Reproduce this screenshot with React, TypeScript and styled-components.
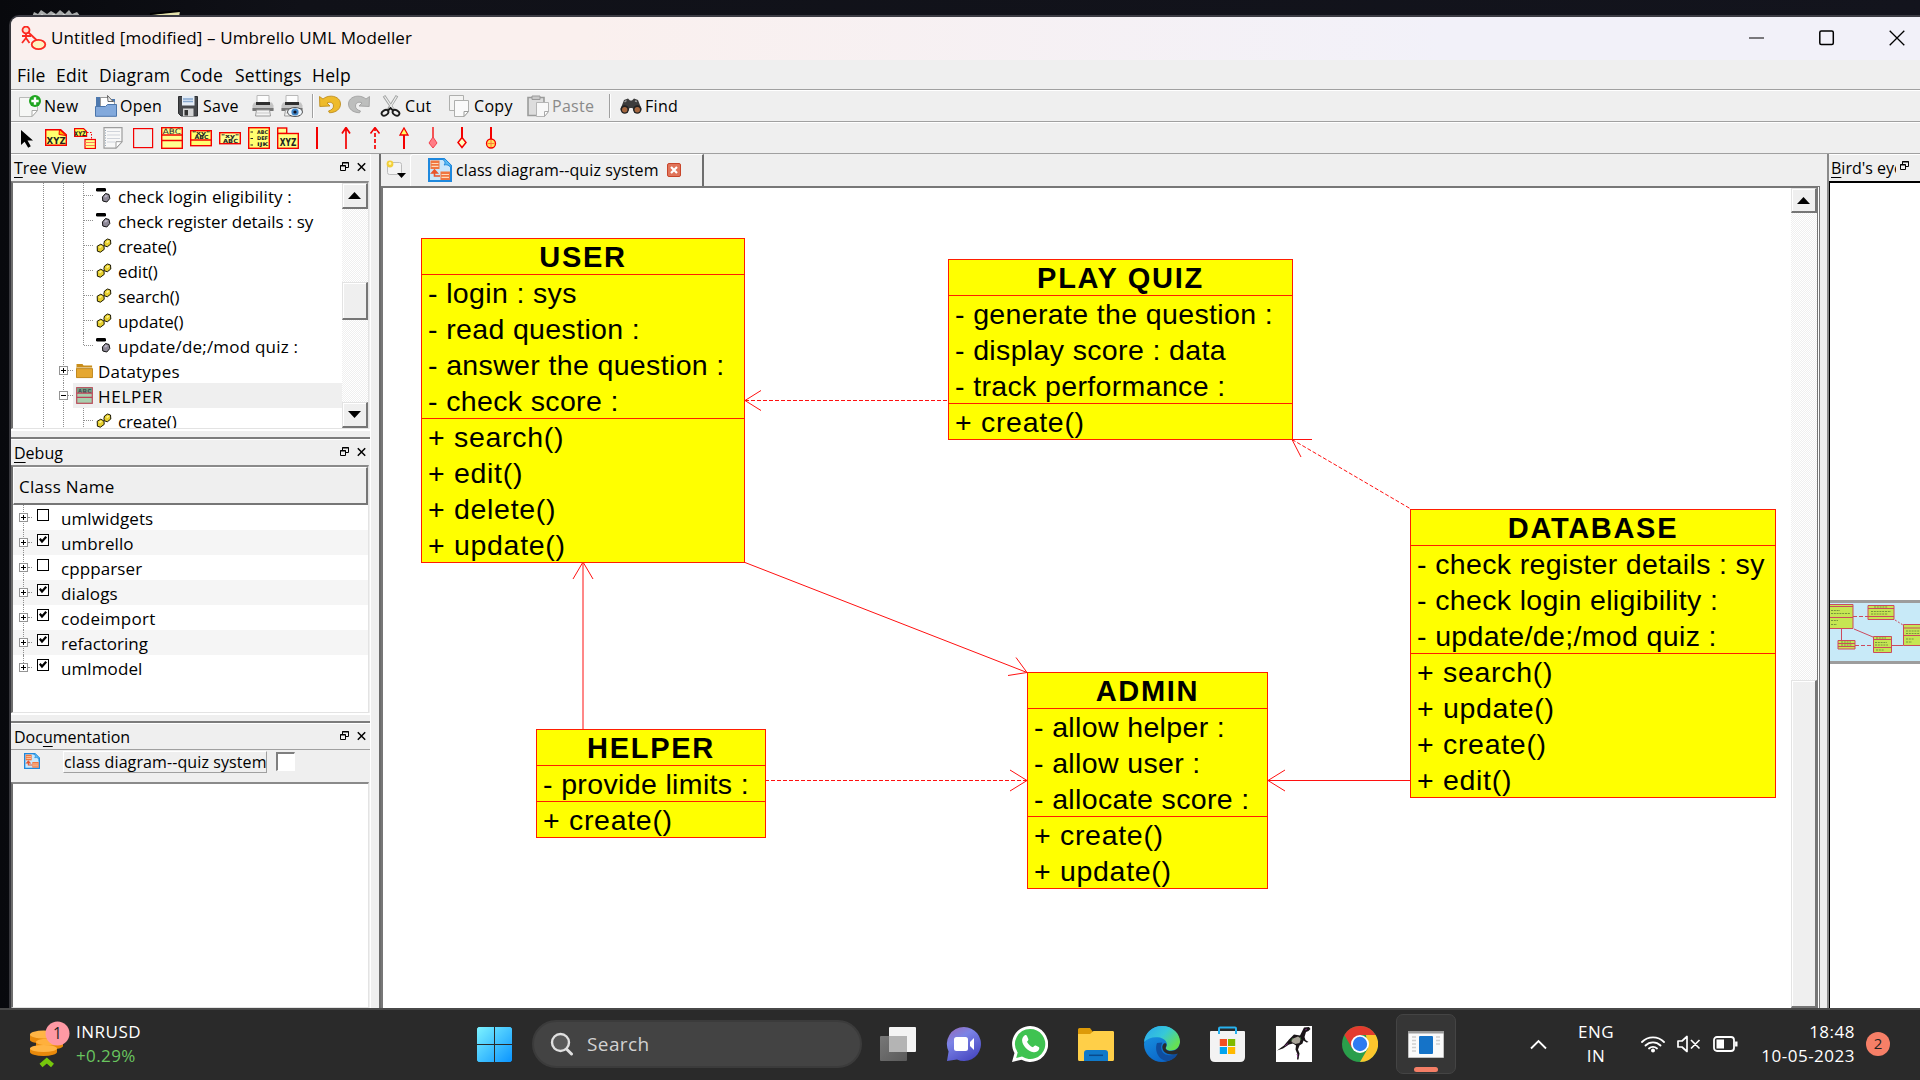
import React from "react";
import styled, { createGlobalStyle, css } from "styled-components";

const Global = createGlobalStyle`
  * { box-sizing: border-box; }
  body { margin: 0; background: #0c0d14; overflow: hidden; }
`;

const uiFont = `"Open Sans", "Noto Sans", sans-serif`;

/* ---------- shell ---------- */

const Screen = styled.div`
  width: 1920px;
  height: 1080px;
  display: flex;
  flex-direction: column;
  overflow: hidden;
  background: linear-gradient(90deg, #08090d 0, #101118 300px, #13141d 100%);
  font-family: ${uiFont};
  color: #000;
`;

const Wallpaper = styled.div`
  height: 15px;
  flex: none;
`;

const WindowRow = styled.div`
  flex: 1;
  min-height: 0;
  display: flex;
  padding-left: 9px;
`;

const Window = styled.div`
  flex: 1;
  min-width: 0;
  display: flex;
  flex-direction: column;
  background: #efefef;
  border-top: 2px solid #3b3b43;
  border-left: 2px solid #37373c;
  border-top-left-radius: 10px;
  overflow: hidden;
`;

const TitleBar = styled.div`
  height: 43px;
  flex: none;
  display: flex;
  align-items: center;
  padding-left: 10px;
  background: linear-gradient(90deg, #faf0ee 0, #faf0ee 30%, #f2f1f9 75%, #f2f1f9 100%);
`;

const TitleText = styled.div`
  flex: 1;
  margin: -3px 0 0 4px;
  font-size: 17px;
  letter-spacing: 0.1px;
`;

const Caption = styled.div`
  display: flex;
  gap: 54px;
  align-items: center;
  padding-right: 15px;
  margin-top: -2px;
`;

const MenuBar = styled.div`
  height: 29px;
  flex: none;
  display: flex;
  align-items: center;
  padding: 1px 0 0 6px;
`;

const MenuItem = styled.div<{ $w: number }>`
  width: ${(p) => p.$w}px;
  font-size: 17.5px;
  letter-spacing: 0.25px;
`;

const ToolBar = styled.div<{ $pad: number; $gap?: number }>`
  height: 32px;
  flex: none;
  display: flex;
  align-items: center;
  gap: ${(p) => p.$gap ?? 0}px;
  padding-left: ${(p) => p.$pad}px;
  border-top: 1px solid #a0a0a0;
  box-shadow: inset 0 1px 0 #fff;
`;

const Tool = styled.div<{ $w: number; $off?: boolean }>`
  width: ${(p) => p.$w}px;
  display: flex;
  align-items: center;
  gap: 3px;
  font-size: 16px;
  letter-spacing: 0.3px;
  white-space: nowrap;
  color: ${(p) => (p.$off ? "#8a8a8a" : "#000")};
  svg { flex: none; }
`;

const Divider = styled.div<{ $w: number }>`
  width: ${(p) => p.$w}px;
  height: 24px;
  border-left: 1px solid #a0a0a0;
  box-shadow: inset 1px 0 0 #fff;
`;

const Body = styled.div`
  flex: 1;
  min-height: 0;
  display: flex;
  border-top: 1px solid #a0a0a0;
`;

/* ---------- docks ---------- */

const LeftDock = styled.div`
  width: 359px;
  flex: none;
  display: flex;
  flex-direction: column;
`;

const Split = styled.div`
  width: 11px;
  flex: none;
  border-right: 2px solid #6c6c6c;
  border-left: 1px solid #fff;
`;

const DockTitle = styled.div<{ $h: number }>`
  height: ${(p) => p.$h}px;
  flex: none;
  display: flex;
  align-items: center;
  justify-content: space-between;
  padding: 0 4px 0 3px;
  font-size: 16px;
  white-space: nowrap;
  border-top: 1px solid #fff;
  u { text-underline-offset: 3px; text-decoration-thickness: 1px; text-decoration-skip-ink: none; }
`;

const DockButtons = styled.div`
  display: flex;
  gap: 8px;
  margin-top: -2px;
`;

const Gap = styled.div`
  height: 10px;
  flex: none;
  border-top: 2px solid #fff;
  border-bottom: 2px solid #7c7c7c;
`;

const Sunken = styled.div<{ $h?: number }>`
  ${(p) => (p.$h ? css`height: ${p.$h}px; flex: none;` : css`flex: 1;`)}
  margin-right: 1px;
  display: flex;
  overflow: hidden;
  background: #fff;
  border: 1px solid #a0a0a0;
  border-top: 2px solid #8a8a8a;
  border-left: 2px solid #6e6e6e;
  border-right: 1px solid #e3e3e3;
  border-bottom: 1px solid #e3e3e3;
`;

const Rows = styled.div`
  flex: 1;
  min-width: 0;
  display: flex;
  flex-direction: column;
`;

const TreeRow = styled.div<{ $lead: number }>`
  height: 25px;
  flex: none;
  display: flex;
  padding-left: ${(p) => p.$lead}px;
`;

const Guide = styled.div<{ $half?: boolean; $tight?: boolean }>`
  width: ${(p) => (p.$tight ? 1 : 20)}px;
  height: ${(p) => (p.$half ? 12 : 25)}px;
  border-left: 1px dotted #8f8f8f;
`;

const Twig = styled.div<{ $w: number }>`
  width: ${(p) => p.$w}px;
  height: 13px;
  border-bottom: 1px dotted #8f8f8f;
`;

const Expander = styled.div`
  width: 9px;
  height: 9px;
  flex: none;
  margin: 8px 0 0 -5px;
  border: 1px solid #949494;
  background:
    linear-gradient(#000, #000) center / 5px 1px no-repeat,
    #fff;
  &[data-plus="true"] {
    background:
      linear-gradient(#000, #000) center / 5px 1px no-repeat,
      linear-gradient(#000, #000) center / 1px 5px no-repeat,
      #fff;
  }
`;

const TreeCell = styled.div<{ $sel?: boolean; $gap: number; $pad: number; $ls?: number }>`
  flex: 1;
  display: flex;
  align-items: center;
  gap: ${(p) => p.$gap}px;
  padding: 2px 0 0 ${(p) => p.$pad}px;
  background: ${(p) => (p.$sel ? "#efefef" : "transparent")};
  font-size: 17px;
  letter-spacing: ${(p) => p.$ls ?? 0}px;
  line-height: 23px;
  white-space: nowrap;
  svg { flex: none; margin-top: -2px; }
`;

const ScrollTrack = styled.div<{ $w: number }>`
  width: ${(p) => p.$w}px;
  flex: none;
  display: flex;
  flex-direction: column;
  background: repeating-conic-gradient(#fff 0 25%, #efefef 0 50%) 0 0 / 2px 2px;
`;

const ScrollPart = styled.div<{ $h?: number; $mt?: number }>`
  ${(p) => (p.$h ? css`height: ${p.$h}px; flex: none;` : css`flex: 1;`)}
  margin-top: ${(p) => p.$mt ?? 0}px;
  display: flex;
  align-items: center;
  justify-content: center;
  background: #efefef;
  border: 1px solid #e3e3e3;
  border-right: 2px solid #767676;
  border-bottom: 2px solid #767676;
  box-shadow: inset 1px 1px 0 #fff;
`;

const HeaderCell = styled.div`
  height: 38px;
  flex: none;
  display: flex;
  align-items: center;
  padding: 2px 0 0 5px;
  font-size: 17px;
  letter-spacing: 0.3px;
  background: #efefef;
  border: 1px solid #fff;
  border-right: 2px solid #767676;
  border-bottom: 2px solid #767676;
`;

const DebugRow = styled.div<{ $alt: boolean }>`
  height: 25px;
  flex: none;
  display: flex;
  padding-left: 10px;
  background: ${(p) => (p.$alt ? "#f5f5f5" : "#fff")};
`;

const DebugLine = styled.div<{ $last: boolean }>`
  height: ${(p) => (p.$last ? 12 : 25)}px;
  border-left: 1px dotted #8f8f8f;
`;

const CheckBox = styled.div`
  width: 12px;
  height: 12px;
  flex: none;
  margin: 4px 0 0 5px;
  border: 1px solid #000;
  background: #fff;
  svg { display: block; }
`;

const DebugName = styled.div<{ $ls: number }>`
  margin-left: 12px;
  padding-top: 2px;
  line-height: 23px;
  font-size: 17px;
  letter-spacing: ${(p) => p.$ls}px;
`;

const DocHead = styled.div`
  height: 33px;
  flex: none;
  display: flex;
  align-items: flex-start;
  padding: 1px 0 0 13px;
  border-top: 1px solid #a0a0a0;
  > svg { margin-top: 2px; }
`;

const DocName = styled.div`
  width: 204px;
  height: 22px;
  margin-left: 23px;
  font-size: 16px;
  letter-spacing: 0.1px;
  line-height: 21px;
  white-space: nowrap;
  border: 1px solid #fff;
  border-right-color: #a0a0a0;
  border-bottom-color: #a0a0a0;
`;

const DocBox = styled.div`
  width: 19px;
  height: 19px;
  margin: 1px 0 0 9px;
  background: #fff;
  border: 1px solid #fff;
  border-top: 2px solid #7f7f7f;
  border-left: 2px solid #7f7f7f;
`;

/* ---------- canvas ---------- */

const Center = styled.div`
  width: 1439px;
  flex: none;
  display: flex;
  flex-direction: column;
`;

const TabBar = styled.div`
  height: 32px;
  flex: none;
  display: flex;
  padding-left: 4px;
`;

const NewTab = styled.div`
  width: 25px;
  padding-top: 5px;
`;

const Tab = styled.div`
  width: 294px;
  display: flex;
  align-items: center;
  padding: 0 0 2px 17px;
  font-size: 16px;
  letter-spacing: 0.1px;
  border-top: 1px solid #fff;
  border-left: 1px solid #fff;
  border-right: 2px solid #6e6e6e;
  border-top-left-radius: 3px;
  span { margin: 0 8px 0 4px; }
`;

const CanvasFrame = styled.div`
  flex: 1;
  min-height: 0;
  display: flex;
  border-top: 2px solid #777;
  border-left: 2px solid #777;
  border-right: 3px double #777;
  background: #fff;
`;

const Canvas = styled.div`
  position: relative;
  flex: 1;
  overflow: hidden;
  background: #fff;
`;

const Edges = styled.svg`
  position: absolute;
  left: 0;
  top: 0;
`;

const ClassNode = styled.div<{ $x: number; $y: number; $w: number }>`
  position: absolute;
  left: ${(p) => p.$x}px;
  top: ${(p) => p.$y}px;
  width: ${(p) => p.$w}px;
  background: #ff0;
  border: 1px solid #ff1e00;
  font-family: "Liberation Sans", Arial, sans-serif;
  font-size: 28.5px;
  white-space: pre;
`;

const ClassTitle = styled.div`
  height: 35px;
  line-height: 36px;
  text-align: center;
  font-weight: bold;
  font-size: 29px;
  letter-spacing: 1.7px;
`;

const Compartment = styled.div<{ $ls: number }>`
  border-top: 1px solid #ff1e00;
  padding-left: 6px;
  letter-spacing: ${(p) => p.$ls}px;
`;

const Member = styled.div`
  height: 36px;
  line-height: 38px;
  &:first-child { height: 35px; line-height: 37px; }
`;

const Bird = styled.div`
  flex: 1;
  min-width: 0;
  display: flex;
  flex-direction: column;
  margin-left: 7px;
  border-left: 2px solid #8a8a8a;
`;

const BirdTitle = styled.div`
  height: 27px;
  flex: none;
  display: flex;
  align-items: center;
  padding-left: 2px;
  font-size: 16px;
  white-space: nowrap;
  border-top: 1px solid #fff;
  overflow: hidden;
  u { text-underline-offset: 3px; text-decoration-thickness: 1px; }
  svg { flex: none; margin: -4px 8px 0 4px; }
`;

const BirdClip = styled.div`
  width: 65px;
  flex: none;
  overflow: hidden;
`;

const BirdView = styled.div`
  flex: 1;
  background: #fff;
  border-top: 2px solid #000;
  border-left: 1px solid #000;
  padding-top: 417px;
  svg { display: block; }
`;

/* ---------- taskbar ---------- */

const Taskbar = styled.div`
  height: 72px;
  flex: none;
  display: flex;
  align-items: center;
  padding-bottom: 2px;
  background: #2a2a2a;
  border-top: 2px solid #484848;
  color: #fff;
  font-size: 17px;
`;

const Widget = styled.div`
  width: 465px;
  display: flex;
  align-items: center;
  gap: 4px;
  padding-left: 28px;
`;

const Stack = styled.div<{ $align: string; $w?: number; $ls: number; $ml?: number }>`
  width: ${(p) => (p.$w ? p.$w + "px" : "auto")};
  margin-left: ${(p) => p.$ml ?? 0}px;
  display: flex;
  flex-direction: column;
  align-items: ${(p) => p.$align};
  line-height: 24px;
  letter-spacing: ${(p) => p.$ls}px;
`;

const Up = styled.span`
  color: #69c55f;
  letter-spacing: 0.4px;
`;

const SearchPill = styled.div`
  width: 330px;
  height: 48px;
  display: flex;
  align-items: center;
  padding-left: 16px;
  gap: 13px;
  border-radius: 24px;
  background: #434343;
  border: 2px solid #3b3b3b;
  color: #d2d2d2;
  font-size: 19px;
  letter-spacing: 0.4px;
`;

const StartCell = styled.div`
  width: 67px;
  display: flex;
  padding-left: 12px;
`;

const AppList = styled.div`
  display: flex;
  margin-left: 3px;
`;

const AppCell = styled.div`
  width: 66px;
  display: flex;
  align-items: center;
  justify-content: center;
`;

const ActiveApp = styled.div`
  width: 60px;
  height: 60px;
  display: flex;
  flex-direction: column;
  align-items: center;
  justify-content: space-between;
  padding: 16px 0 1px;
  border-radius: 7px;
  background: #363636;
  border: 1px solid #444;
`;

const ActiveMark = styled.div`
  width: 24px;
  height: 5px;
  border-radius: 3px;
  background: #f47e66;
`;

const Tray = styled.div`
  flex: 1;
  display: flex;
  align-items: center;
`;

const TrayIcon = styled.div<{ $ml: number }>`
  display: flex;
  margin-left: ${(p) => p.$ml}px;
`;

const Notice = styled.div`
  width: 24px;
  height: 24px;
  margin-left: 11px;
  border-radius: 50%;
  background: #f67f67;
  color: #222;
  font-size: 15px;
  line-height: 23px;
  text-align: center;
`;

/* ---------- small drawings ---------- */

const RestoreIcon = () => (
  <svg width="9" height="10" viewBox="0 0 9 10" fill="none" stroke="#000">
    <path d="M2.5 3V.5h6v5H6M2 1h7" />
    <path d="M.5 3.5h5v5h-5zM0 4h6" />
  </svg>
);
const CloseIcon = () => (
  <svg width="9" height="10" viewBox="0 0 9 10" stroke="#000" strokeWidth="1.5">
    <path d="M.8 1.3l7.4 7.4M8.2 1.3L.8 8.7" />
  </svg>
);
const Arrow = ({ down }: { down?: boolean }) => (
  <svg width="13" height="7" viewBox="0 0 13 7">
    <path d={down ? "M0 0h13L6.5 7z" : "M0 7h13L6.5 0z"} />
  </svg>
);
const AttrIcon = () => (
  <svg width="16" height="16" viewBox="0 0 16 16">
    <rect x="0" y="0" width="10" height="3.6" rx="1.4" />
    <path d="M9.5 5.5l3.5 1 .8 4-3 3.5-4-1-.4-4z" fill="#8d8896" stroke="#111" strokeWidth="1" />
    <path d="M9.6 7l2.4.6-2 2-2-.5z" fill="#bbb6c6" />
  </svg>
);
const OpIcon = () => (
  <svg width="16" height="16" viewBox="0 0 16 16" stroke="#1a1700" strokeWidth="1">
    <path d="M8.500 3l3-2 3 1 .3 4-3.500 2.800-2.800-1-.6-2.200z" fill="#e6cf2e" />
    <path d="M1.200 8.200l3.600-2L8 8l.2 3.400-3.800 2.800-3-1z" fill="#e6cf2e" />
    <path d="M2.600 8.900l2.400-1.200 1.200.9-2.200 1.600zM10 3.900l2-1.300 1.400 1-2.200 1.600z" fill="#fff48c" stroke="none" />
  </svg>
);
const FolderIcon = () => (
  <svg width="17" height="16" viewBox="0 0 17 16">
    <path d="M.5 1h6l1 1.6h8.6V14.5H.5z" fill="#c98d1a" />
    <path d="M1 4.4h15v3H1z" fill="#fff" opacity=".75" />
    <path d="M.5 5.6h16v9H.5z" fill="#e5a730" stroke="#b87d10" strokeWidth=".8" />
  </svg>
);
const ClassIcon = () => (
  <svg width="17" height="17" viewBox="0 0 17 17">
    <rect x=".7" y=".7" width="15.6" height="15.6" fill="#a9cfae" stroke="#b84a58" strokeWidth="1.2" />
    <rect x="1" y="1" width="15" height="4.6" fill="#7b9c84" />
    <text x="2" y="5.6" fontSize="5.6" fontWeight="bold" fontFamily="Liberation Sans" fill="#31434a">ABC</text>
    <path d="M.7 6.2h15.6M.7 10.4h15.6" stroke="#c0405a" strokeWidth="1.2" />
  </svg>
);
const DiagramIcon = ({ size }: { size: number }) => (
  <svg width={size} height={size} viewBox="0 0 24 24">
    <path d="M1 1h15l7 7v15H1z" fill="#c9e7fb" stroke="#1e88dd" strokeWidth="2" />
    <path d="M13 1h4l6 6v5c0-4-3-6-7-5 2-2 1-5-3-6z" fill="#5cbcf2" stroke="#1e88dd" />
    <rect x="2.500" y="2.500" width="9" height="8.500" fill="#f0763f" />
    <rect x="12.500" y="13.500" width="9.500" height="8.500" fill="#f0763f" />
    <path d="M3.500 5.500h7M3.500 8.300h7M13.500 16.500h7.500M13.500 19.300h7.500" stroke="#ffd9b8" strokeWidth="1.200" />
    <path d="M6.500 12V18H12M3.800 15l2.700-3 2.700 3z" stroke="#e8542c" strokeWidth="1.600" fill="none" />
  </svg>
);

const Svg = (p: { children: React.ReactNode }) => (
  <svg width="22" height="22" viewBox="0 0 22 22" fill="none">{p.children}</svg>
);
const glyph = { fontFamily: "DejaVu Sans", fontWeight: "bold" as const, fill: "#222" };

const PrinterBody = () => (
  <>
    <path d="M5 .5h12v9H5z" fill="#fdfdfd" stroke="#b9b9b9" />
    <path d="M2 7.5h18l1.5 3v5H.5v-5z" fill="#c4c4c4" />
    <rect x="4" y="7" width="14" height="3" fill="#2f2f2f" />
    <rect x=".5" y="13" width="21" height="3" fill="#777" />
    <path d="M4.500 15h13l1 6h-15z" fill="#f4f4f4" stroke="#9b9b9b" />
    <path d="M5 18h12" stroke="#c9c9c9" />
  </>
);

const NewDoc = () => (
  <Svg>
    <path d="M.5 2.500h18v13l-5.500 6H.5z" fill="#f6f7f5" stroke="#b9bab8" />
    <path d="M18.500 15.500h-5.500v6z" fill="#fff" stroke="#a9aaa8" />
    <circle cx="16" cy="6" r="6" fill="#1fa51f" />
    <path d="M16 2.300v7.400M12.300 6h7.400" stroke="#fff" strokeWidth="2.400" />
  </Svg>
);
const OpenIcon = () => (
  <Svg>
    <path d="M1 2h7l1 2h11v15H1z" fill="#4d78ae" />
    <path d="M5.500 2.500h8l6 5V14h-14z" fill="#fff" stroke="#999" />
    <path d="M12.500.5l5.500 6h-5z" fill="#f2f2f2" stroke="#444" strokeWidth=".8" />
    <path d="M.5 11.500h10l2-2h9v11.800H.5z" fill="#82a9dc" stroke="#4a75ab" />
  </Svg>
);
const SaveIcon = () => (
  <Svg>
    <path d="M.5 1.500h19v19.500H3l-2.500-2.500z" fill="#47494c" stroke="#2f3032" />
    <rect x="4" y="1" width="12.500" height="9.500" fill="#e6eef7" />
    <path d="M5 4h10M5 6.500h10" stroke="#87a8cf" strokeWidth="1.400" />
    <rect x="5" y="13.500" width="10.500" height="7.500" fill="#d4d5d6" />
    <rect x="6.500" y="15" width="3.500" height="5.500" fill="#333" />
  </Svg>
);
const UndoArrow = ({ main, edge, flip }: { main: string; edge: string; flip?: boolean }) => (
  <Svg>
    <g transform={flip ? "translate(22 0) scale(-1 1)" : undefined}>
      <path d="M.5 1.500L.8 11.500 11 11l-3-3c3-1.500 6.500-.5 6.500 3 0 2-1.500 4-5 5l1 1.800c7-.3 11-4 11-8.800C21.500 3.500 16 .8 11 1.200 8.500 1.300 6 2.300 4 4z" fill={main} stroke={edge} strokeWidth=".8" />
    </g>
  </Svg>
);
const CutIcon = () => (
  <Svg>
    <path d="M4 .8L13.500 15M17 .8L8 15" stroke="#a2a4a3" strokeWidth="3" />
    <path d="M4.500 1.500L13 14M16.500 1.500L9 14" stroke="#f1f1f1" strokeWidth="1.200" />
    <ellipse cx="5" cy="17.800" rx="3.600" ry="2.500" transform="rotate(-30 5 17.800)" stroke="#1c1c1c" strokeWidth="1.900" />
    <ellipse cx="16" cy="17.800" rx="3.600" ry="2.500" transform="rotate(30 16 17.800)" stroke="#1c1c1c" strokeWidth="1.900" />
    <path d="M8 15.500l2.500-2.500 2.500 2.500" stroke="#1c1c1c" strokeWidth="1.800" />
  </Svg>
);
const CopyIcon = () => (
  <Svg>
    <path d="M.5.5h14v15H.5z" fill="#f4f4f3" stroke="#aeafad" />
    <path d="M5.500 5.500h14v11l-4.500 5H5.500z" fill="#fafafa" stroke="#aeafad" />
    <path d="M19.500 16.500H15v5z" fill="#fff" stroke="#9c9d9b" />
  </Svg>
);
const PasteIcon = () => (
  <Svg>
    <path d="M1 2.500h16v18H1z" fill="#ddd" stroke="#9a9b9a" strokeWidth="1.600" />
    <path d="M5 1h8v3.500H5z" fill="#c9c9c9" stroke="#999" />
    <path d="M9.500 7.500h12v9l-4 5h-8z" fill="#f8f8f8" stroke="#b5b5b5" />
    <path d="M21.500 16.500h-4v5z" fill="#fff" stroke="#aaa" />
  </Svg>
);
const FindIcon = () => (
  <Svg>
    <path d="M4 5l4-1.500 2 2h2l2-2L18 5l3.500 9-3 4h-4l-2-5H9.500l-2 5h-4l-3-4z" fill="#3c3c3c" />
    <circle cx="4.700" cy="14.500" r="4.200" fill="#222" />
    <circle cx="17.300" cy="14.500" r="4.200" fill="#222" />
    <circle cx="4.700" cy="14.800" r="2.700" fill="#a4663e" />
    <circle cx="17.300" cy="14.800" r="2.700" fill="#a4663e" />
    <path d="M4.500 7l2-1.500M15 6l2 .5" stroke="#9a9a9a" strokeWidth="1.500" />
  </Svg>
);

const red = "#f40000";
const shapeTools: React.ReactNode[] = [
  <path d="M5 3v15l3.600-3.300 3.600 6 2.600-1.500L11.500 13.600H17z" fill="#000" />,
  <>
    <path d="M.7 2.700h15l5.600 5v10.600H.7z" fill="#ffff6e" stroke={red} strokeWidth="1.400" />
    <path d="M14.500 2.500l6.500 6-7-1z" fill="#ffb000" stroke={red} />
    <text x="1.600" y="16.500" fontSize="8.600" textLength="19" lengthAdjust="spacingAndGlyphs" {...glyph}>XYZ</text>
  </>,
  <>
    <path d="M.6 1.600h9l3 3v4.800H.6z" fill="#ffff50" stroke={red} strokeWidth="1.200" />
    <text x="0" y="8.500" fontSize="6.500" textLength="12" lengthAdjust="spacingAndGlyphs" {...glyph}>XYZ</text>
    <path d="M13 5.500h4.500V12" stroke={red} strokeDasharray="1.500 1.500" />
    <rect x="11" y="12.500" width="10.400" height="9" fill="#ffff8a" stroke={red} strokeWidth="1.200" />
    <path d="M11 15.500h10M11 18.500h10" stroke="#ff7a5a" />
  </>,
  <>
    <path d="M1 .7h18v14l-6 6.500H1z" fill="#f8f8f8" stroke="#9d9d9d" strokeWidth="1.200" />
    <path d="M19 14.700h-6v6.500z" fill="#fff" stroke="#9d9d9d" />
    <path d="M4 4.500h13M4 8h13M4 11.500h13M4 15h8" stroke="#cfd3da" />
    <path d="M2.500 3v16" stroke="#9ab" strokeDasharray="1 1.500" />
  </>,
  <rect x="1.600" y="1.600" width="19" height="19" stroke={red} strokeWidth="1.200" />,
  <>
    <rect x=".7" y=".7" width="20.600" height="20.600" fill="#ffff90" stroke={red} strokeWidth="1.400" />
    <text x="1.800" y="7.200" fontSize="7.500" textLength="18" lengthAdjust="spacingAndGlyphs" fontFamily="DejaVu Sans" fill="#222">ABC</text>
    <path d="M.7 8h20.600M.7 13.500h20.600" stroke={red} strokeWidth="1.400" />
  </>,
  <>
    <rect x=".7" y="3.700" width="20.600" height="15" fill="#ffff70" stroke={red} strokeWidth="1.400" />
    <text x="2" y="8.200" fontSize="5.500" textLength="18" lengthAdjust="spacingAndGlyphs" {...glyph}>"xy"</text>
    <text x="4.500" y="12" fontSize="5.500" textLength="14" lengthAdjust="spacingAndGlyphs" {...glyph}>ABC</text>
    <path d="M.7 13h20.600" stroke={red} strokeWidth="1.400" />
  </>,
  <>
    <rect x=".7" y="5.700" width="20.600" height="11" fill="#ffff90" stroke={red} strokeWidth="1.400" />
    <text x="2" y="10.600" fontSize="5.600" textLength="18" lengthAdjust="spacingAndGlyphs" {...glyph}>"xy"</text>
    <text x="4" y="15.500" fontSize="5.600" textLength="15" lengthAdjust="spacingAndGlyphs" {...glyph}>ABC</text>
  </>,
  <>
    <rect x=".7" y=".7" width="20.600" height="20.600" fill="#ffff70" stroke={red} strokeWidth="1.400" />
    <text x="9" y="6.600" fontSize="5" textLength="11" lengthAdjust="spacingAndGlyphs" {...glyph}>ABC</text>
    <text x="9" y="13" fontSize="5" textLength="11" lengthAdjust="spacingAndGlyphs" {...glyph}>DEF</text>
    <text x="9" y="19.300" fontSize="5" textLength="11" lengthAdjust="spacingAndGlyphs" {...glyph}>IJK</text>
    <path d="M2.500 5h2.500M2.500 11.500h2.500M2.500 18h2.500" stroke="#222" />
  </>,
  <>
    <rect x=".7" y="1" width="9" height="5.500" fill="#ffff90" stroke={red} strokeWidth="1.400" />
    <rect x=".7" y="6.500" width="20.600" height="14.800" fill="#ffff80" stroke={red} strokeWidth="1.400" />
    <text x="2.800" y="18.500" fontSize="10" textLength="16.500" lengthAdjust="spacingAndGlyphs" {...glyph}>XYZ</text>
  </>,
  <path d="M11 0v22" stroke={red} strokeWidth="2" />,
  <path d="M11 22V1M7 6.500l4-6 4 6" stroke={red} strokeWidth="1.700" />,
  <><path d="M11 22V2" stroke={red} strokeWidth="1.700" strokeDasharray="4 2" /><path d="M6.500 6.500l4.500-6 4.500 6" stroke={red} strokeWidth="1.500" /></>,
  <><path d="M11 22V8" stroke={red} strokeWidth="2" /><path d="M7 8l4-7 4 7z" fill="#ff6" stroke={red} strokeWidth="1.300" /></>,
  <><path d="M11 0v11" stroke={red} strokeWidth="1.300" /><path d="M11 10l4 6-4 5-4-5z" fill="#ff7d86" stroke="#f2404c" /></>,
  <><path d="M11 0v11" stroke={red} strokeWidth="2" /><path d="M11 10.500l4 5-4 5-4-5z" fill="#ffffc0" stroke={red} strokeWidth="1.500" /></>,
  <><path d="M11 0v12" stroke={red} strokeWidth="2" /><circle cx="11" cy="16.500" r="4.500" fill="#ffe35a" stroke={red} strokeWidth="1.300" /><path d="M11 13v7M7.500 16.500h7" stroke="#ff7a3a" /></>,
];

/* ---------- data ---------- */

const treeAttrs: { t: string; op?: boolean; ls?: number; end?: boolean }[] = [
  { t: "check login eligibility :", ls: 0.12 },
  { t: "check register details : sy", ls: -0.06 },
  { t: "create()", op: true, ls: -0.15 },
  { t: "edit()", op: true, ls: -0.1 },
  { t: "search()", op: true, ls: -0.15 },
  { t: "update()", op: true, ls: -0.1 },
  { t: "update/de;/mod quiz :", ls: 0.2, end: true },
];

const debugClasses: [string, boolean, number][] = [
  ["umlwidgets", false, 0.1],
  ["umbrello", true, 0.1],
  ["cppparser", false, 0.1],
  ["dialogs", true, 0.1],
  ["codeimport", true, 0.25],
  ["refactoring", true, 0],
  ["umlmodel", true, 0.1],
];

const classes = [
  { name: "USER", x: 38, y: 50, w: 324, attrs: ["login : sys", "read question :", "answer the question :", "check score :"], ops: ["search()", "edit()", "delete()", "update()"] },
  { name: "PLAY QUIZ", x: 565, y: 71, w: 345, attrs: ["generate the question :", "display score : data", "track performance :"], ops: ["create()"] },
  { name: "DATABASE", x: 1027, y: 321, w: 366, attrs: ["check register details : sy", "check login eligibility :", "update/de;/mod quiz :"], ops: ["search()", "update()", "create()", "edit()"] },
  { name: "ADMIN", x: 644, y: 484, w: 241, attrs: ["allow helper :", "allow user :", "allocate score :"], ops: ["create()", "update()"] },
  { name: "HELPER", x: 153, y: 541, w: 230, attrs: ["provide limits :"], ops: ["create()"] },
];

const Minimap = () => (
  <svg width="90" height="64" viewBox="0 0 90 64">
    <rect width="90" height="64" fill="#c8eaf8" />
    <path d="M0 1.500h90M0 62.500h90" stroke="#9d9d9d" strokeWidth="3" />
    <g stroke="#cc4a5e" fill="none">
      <path d="M23 16.500h15M25 45.500h18" strokeDasharray="4 2" />
      <path d="M11.500 41V29M24 29l19 8M62 45.500h11" />
      <path d="M65 20l8 5" strokeDasharray="2 1.500" />
      <g fill="#c6e653">
        <path d="M-1 4.500h24v24H-1zM38 5.500h26v14H38zM73.500 24.500h20v21h-20zM8 40.500h17v8.500H8zM43.500 36.500h18v16h-18z" />
      </g>
      <path d="M0 6.500h23M0 17.500h23M38 8.500h26M38 16.500h26M73.500 28h17M73.500 35.500h17M8 43.500h17M8 46.500h17M43.500 39.500h18M43.500 47.500h18" />
    </g>
    <g stroke="#5f7a34" strokeDasharray="2 .8" opacity=".75">
      <path d="M1 10.500h9M1 13.500h19M1 20.500h7M1 24.500h6M41 11.500h20M41 14h17M44 7h14M76 31h14M76 33.500h14M76 39h8M76 42h6M11 42h10M11 45h11M45 42.500h12M45 45h13M46 50h8M46 38h10" />
    </g>
  </svg>
);

/* ---------- taskbar drawings ---------- */

const Coins = () => (
  <svg width="44" height="50" viewBox="0 0 44 50">
    <g fill="#e8890b">
      <path d="M2 15h27v6a13.500 3.500 0 0 1-27 0z" />
      <path d="M8 22h27v5a13.500 3.500 0 0 1-27 0z" />
      <path d="M2 29h27v4a13.500 4 0 0 1-27 0z" />
    </g>
    <ellipse cx="15.500" cy="15.500" rx="13.500" ry="4" fill="#ffb545" />
    <ellipse cx="21.500" cy="23" rx="13.500" ry="3.500" fill="#ffb03c" />
    <ellipse cx="15.500" cy="29.500" rx="13.500" ry="3.500" fill="#ffb545" />
    <path d="M13 46.500l5.800-5 5.700 5" fill="none" stroke="#76c60c" strokeWidth="4.500" />
    <circle cx="29.500" cy="14.500" r="12" fill="#ff99a4" />
    <text x="29.500" y="20" textAnchor="middle" fontSize="15.500" fontFamily="Open Sans" fill="#222">1</text>
  </svg>
);
const WinLogo = () => (
  <svg width="35" height="35" viewBox="0 0 35 35">
    <defs><linearGradient id="win" x1="0" y1="0" x2="1" y2="1"><stop offset="0" stopColor="#7df3ff" /><stop offset="1" stopColor="#0a94ff" /></linearGradient></defs>
    <path fill="url(#win)" d="M1.500 0H17v17H0V1.500zM18 0h15.500L35 1.500V17H18zM0 18h17v17H1.500L0 33.500zM18 18h17v15.500L33.500 35H18z" />
  </svg>
);
const SearchGlass = () => (
  <svg width="24" height="24" viewBox="0 0 24 24" fill="none" stroke="#e0e0e0">
    <circle cx="10.500" cy="10.500" r="8.500" strokeWidth="2.400" fill="#5a5a5a" />
    <path d="M16.500 17l5 5" strokeWidth="3" strokeLinecap="round" />
  </svg>
);
const A = (p: { children: React.ReactNode }) => <svg width="36" height="36" viewBox="0 0 36 36">{p.children}</svg>;

const apps: React.ReactNode[] = [
  <A>
    <defs><linearGradient id="tv" x1="0" y1="0" x2="1" y2="1"><stop offset="0" stopColor="#777" /><stop offset="1" stopColor="#5a5a5a" /></linearGradient></defs>
    <rect x="9" y="1" width="27" height="25" rx="1" fill="#f4f4f4" />
    <rect x="0" y="10" width="27" height="25" rx="1" fill="url(#tv)" />
    <rect x="9" y="10" width="18" height="16" fill="#b4b4b4" />
  </A>,
  <A>
    <defs><linearGradient id="ch" x1="0" y1="0" x2=".6" y2="1"><stop offset="0" stopColor="#9a68b4" /><stop offset=".4" stopColor="#7b83e6" /><stop offset="1" stopColor="#4b4cc4" /></linearGradient></defs>
    <path d="M18 1a17 17 0 1 1-7 32.500L1 35l1.600-9.500A17 17 0 0 1 18 1z" fill="url(#ch)" />
    <rect x="8" y="11" width="14" height="14" rx="2.500" fill="#fff" />
    <path d="M24 16l4-4v12l-4-4z" fill="#fff" />
  </A>,
  <A>
    <path d="M18 0a18 18 0 1 1-8.500 33.800L0 36l2.500-9A18 18 0 0 1 18 0z" fill="#fff" />
    <path d="M18 3a15 15 0 1 1-8 27.500L4.200 32l1.500-5.500A15 15 0 0 1 18 3z" fill="#3fc351" />
    <path d="M12.500 9.500c1-.8 2-.6 2.500.5l1.300 3c.3.800-.2 1.500-1.300 2.700 1.300 2.600 3.300 4.500 6 5.600 1.200-1.500 1.800-2.200 2.700-1.800l3 1.500c.8.500.7 1.200.2 2.500-.8 2-3.300 3-5.300 2.700-6-1-11-6.500-11.500-11.500-.2-2 .9-4.200 2.400-5.200z" fill="#fff" />
  </A>,
  <A>
    <path d="M0 3.500Q0 2 1.500 2H12l3 4h20q1 0 1 1v10H0z" fill="#dd9a08" />
    <path d="M0 8h12l3.500-3H35q1 0 1 1.500v27q0 1.500-1.500 1.500h-33Q0 35 0 33.500z" fill="#ffcf48" />
    <path d="M6 35v-8q0-3 3-3h18q3 0 3 3v8z" fill="#1079c9" />
    <path d="M11 29.300h14" stroke="#0a4a8c" strokeWidth="1.500" />
  </A>,
  <A>
    <defs>
      <linearGradient id="e1" x1="0" y1="0" x2="1" y2=".6"><stop offset="0" stopColor="#2aa5f0" /><stop offset=".55" stopColor="#36c8d8" /><stop offset="1" stopColor="#66e052" /></linearGradient>
      <linearGradient id="e2" x1="0" y1="0" x2=".5" y2="1"><stop offset="0" stopColor="#1b9be6" /><stop offset="1" stopColor="#0b66c8" /></linearGradient>
    </defs>
    <circle cx="18" cy="18" r="18" fill="url(#e2)" />
    <path d="M0 16C1 7 8 0 18 0c11 0 18 8 18 15.500 0 6-4.500 9-9 9-4 0-6-1.500-5-3 2-3 1-8-6-10-6-1-12 0-16 4.500z" fill="url(#e1)" />
    <path d="M13 17c-3 8 2 18 11 18 5-1 8-4 9.800-7.500-6 3-14 2.500-16-3-1.500-4 0-6 .5-8z" fill="#0f4d9e" />
    <path d="M36 17v9l-1.500 1.200C29 29.500 20 29 18.500 22.500c-.8-4 2-6 3.500-5 1.500 2-1 4 0 5.500 1 1.800 3 2.200 5.500 2C32 24.700 35 22 36 17z" fill="#2a2a2a" />
  </A>,
  <A>
    <path d="M9 8V2.500q0-1 1-1h15q1 0 1 1V8" fill="none" stroke="#27b1ee" strokeWidth="2" />
    <path d="M0 6q0-1 1-1h33q1 0 1 1v25q0 5-5 5H5q-5 0-5-5z" fill="#f3f3f3" />
    <path d="M9.800 13h7.200v7H9.800z" fill="#f25022" /><path d="M18 13h7.200v7H18z" fill="#7fba00" />
    <path d="M9.800 21h7.200v7H9.800z" fill="#00a4ef" /><path d="M18 21h7.200v7H18z" fill="#ffb900" />
    <path d="M9 5v3M26 5v3" stroke="#27b1ee" strokeWidth="2" />
  </A>,
  <A>
    <path d="M0 0h36v36H0z" fill="#fff" />
    <path d="M1 24.500l7-5 5-6 5-5 6 1 2-4 2-4 5-.5 1.500 2-2 2-2.500 1-1.500 5 1 3 3 2-2 .5-3-2-1 3-3 2-1.500 4 1.500 4-1 6-1.500 0 .500-5-2-5 .5-4-3-2-4 1-6 4z" fill="#1a1518" />
    <path d="M16 13l6-2.500 3 2-1.500 4.500-4 1-4-2z" fill="#a9a498" />
    <path d="M9 20l3-2.500M29 4l2-1M21 28l1 3" stroke="#7a2f7e" />
    <path d="M24 11l1 3M15 15l2-3" stroke="#3a6b39" />
  </A>,
  <A>
    <circle cx="18" cy="18" r="18" fill="#2a9e4b" />
    <path d="M2.400 9A18 18 0 0 1 33.600 9H18l-7.800 13.500z" fill="#e33b2e" />
    <path d="M33.600 9A18 18 0 0 1 18 36l7.800-13.500L24 9z" fill="#fcc62d" />
    <circle cx="18" cy="18" r="9" fill="#fff" />
    <circle cx="18" cy="18" r="7.200" fill="#2f7bf0" />
  </A>,
];

const Wifi = () => (
  <svg width="24" height="18" viewBox="0 0 24 18" fill="none" stroke="#fff" strokeWidth="1.800" strokeLinecap="round">
    <path d="M1 7a15.500 15.500 0 0 1 22 0M4.500 10.500a10.600 10.600 0 0 1 15 0M8 13.500a5.800 5.800 0 0 1 8 0" />
    <circle cx="12" cy="15.500" r="1.600" fill="#fff" stroke="none" />
    <circle cx="12" cy="15.500" r="1" />
  </svg>
);
const Mute = () => (
  <svg width="24" height="18" viewBox="0 0 24 18" fill="none" stroke="#fff" strokeWidth="1.700" strokeLinejoin="round">
    <path d="M1 6h4l5-4.500v15L5 12H1zM14 5l8.500 8.500M22.500 5L14 13.500" />
  </svg>
);
const Battery = () => (
  <svg width="25" height="16" viewBox="0 0 25 16" fill="none" stroke="#fff" strokeWidth="1.800">
    <rect x="1" y="1" width="20" height="14" rx="3" />
    <path d="M23.300 5.500v5" strokeWidth="2.400" />
    <rect x="3.500" y="3.500" width="7.500" height="9" fill="#fff" stroke="none" />
  </svg>
);

export default function App() {
  return (
    <Screen>
      <Global />
      <Wallpaper>
        <svg width="200" height="15" viewBox="0 0 200 15">
          <path d="M32 15l2-5 4 2 3-4 6 4 4-3 5 3 4-4 5 4 4-4 3 4 5-2 4 5z" fill="#a9acac" />
          <path d="M38 15l4-3 4 3 8-3 4 3 6-3 6 3z" fill="#dfe0e0" />
          <path d="M136 15l14-2 30-4-1 6z" fill="#e4e2ac" />
          <path d="M150 12l30-3" stroke="#000" strokeWidth="2" />
        </svg>
      </Wallpaper>
      <WindowRow>
        <Window>
          <TitleBar>
            <svg width="26" height="26" viewBox="0 0 26 26" fill="none" stroke="#fb2a22" strokeWidth="1.800">
              <circle cx="5" cy="4" r="3.500" fill="#fde2d2" />
              <path d="M5 8v5M1 10h9M5 12l-4 5M5 12l3.500 5M7.500 6.500l8.500 8" />
              <ellipse cx="17.500" cy="18.500" rx="6.800" ry="4.600" fill="#fff3c0" />
            </svg>
            <TitleText>Untitled [modified] – Umbrello UML Modeller</TitleText>
            <Caption>
              <svg width="16" height="16"><path d="M0 8h15" stroke="#000" strokeWidth="1.200" /></svg>
              <svg width="16" height="16"><rect x=".800" y="1" width="13.500" height="13.500" rx="1.500" fill="none" stroke="#000" strokeWidth="1.500" /></svg>
              <svg width="16" height="16"><path d="M.7.7l14.600 14.600M15.300.7L.7 15.300" stroke="#000" strokeWidth="1.300" /></svg>
            </Caption>
          </TitleBar>
          <MenuBar>
            <MenuItem $w={39}>File</MenuItem>
            <MenuItem $w={43}>Edit</MenuItem>
            <MenuItem $w={81}>Diagram</MenuItem>
            <MenuItem $w={55}>Code</MenuItem>
            <MenuItem $w={77}>Settings</MenuItem>
            <MenuItem $w={60}>Help</MenuItem>
          </MenuBar>
          <ToolBar $pad={8}>
            <Tool $w={76}><NewDoc />New</Tool>
            <Tool $w={83}><OpenIcon />Open</Tool>
            <Tool $w={74}><SaveIcon />Save</Tool>
            <Tool $w={29}><Svg><PrinterBody /></Svg></Tool>
            <Tool $w={31}>
              <Svg>
                <PrinterBody />
                <ellipse cx="14" cy="17" rx="7.500" ry="4.500" fill="#eef5fb" stroke="#555" />
                <circle cx="14" cy="17" r="3.600" fill="#3f86c8" /><circle cx="14" cy="17" r="1.600" fill="#112" />
              </Svg>
            </Tool>
            <Divider $w={7} />
            <Tool $w={29}><UndoArrow main="#eebb2c" edge="#b98512" /></Tool>
            <Tool $w={32}><UndoArrow main="#bdbebd" edge="#9a9a9a" flip /></Tool>
            <Tool $w={69}><CutIcon />Cut</Tool>
            <Tool $w={78}><CopyIcon />Copy</Tool>
            <Tool $w={82} $off><PasteIcon />Paste</Tool>
            <Divider $w={11} />
            <Tool $w={70}><FindIcon />Find</Tool>
          </ToolBar>
          <ToolBar $pad={5} $gap={7}>
            {shapeTools.map((s, i) => <Svg key={i}>{s}</Svg>)}
          </ToolBar>

          <Body>
            <LeftDock>
              <DockTitle $h={27}>
                <span><u>T</u>ree View</span>
                <DockButtons><RestoreIcon /><CloseIcon /></DockButtons>
              </DockTitle>
              <Sunken $h={248}>
                <Rows>
                  {treeAttrs.map((r) => (
                    <TreeRow key={r.t} $lead={30}>
                      <Guide /><Guide />
                      <Guide $half={r.end} $tight />
                      <Twig $w={9} />
                      <TreeCell $gap={6} $pad={3} $ls={r.ls}>{r.op ? <OpIcon /> : <AttrIcon />}{r.t}</TreeCell>
                    </TreeRow>
                  ))}
                  <TreeRow $lead={30}>
                    <Guide /><Guide $tight />
                    <Expander data-plus="true" /><Twig $w={5} />
                    <TreeCell $gap={5} $pad={3} $ls={0.2}><FolderIcon />Datatypes</TreeCell>
                  </TreeRow>
                  <TreeRow $lead={30}>
                    <Guide /><Guide $tight />
                    <Expander /><Twig $w={5} />
                    <TreeCell $gap={5} $pad={3} $ls={0.7} $sel><ClassIcon />HELPER</TreeCell>
                  </TreeRow>
                  <TreeRow $lead={30}>
                    <Guide /><Guide /><Guide $tight />
                    <Twig $w={9} />
                    <TreeCell $gap={6} $pad={3} $ls={-0.15}><OpIcon />create()</TreeCell>
                  </TreeRow>
                </Rows>
                <ScrollTrack $w={26}>
                  <ScrollPart $h={26}><Arrow /></ScrollPart>
                  <ScrollPart $h={38} $mt={73} />
                  <ScrollPart $h={26} $mt={82}><Arrow down /></ScrollPart>
                </ScrollTrack>
              </Sunken>
              <Gap />
              <DockTitle $h={26}>
                <span><u>D</u>ebug</span>
                <DockButtons><RestoreIcon /><CloseIcon /></DockButtons>
              </DockTitle>
              <Sunken $h={248}>
                <Rows>
                  <HeaderCell>Class Name</HeaderCell>
                  {debugClasses.map(([name, on, ls], i) => (
                    <DebugRow key={name} $alt={i % 2 === 1}>
                      <DebugLine $last={i === debugClasses.length - 1} />
                      <Expander data-plus="true" />
                      <Twig $w={4} />
                      <CheckBox>
                        {on && <svg width="10" height="10" viewBox="0 0 10 10"><path d="M1.800 3.800l2.200 2.700L8.200 1.800" fill="none" stroke="#000" strokeWidth="2.200" /></svg>}
                      </CheckBox>
                      <DebugName $ls={ls}>{name}</DebugName>
                    </DebugRow>
                  ))}
                </Rows>
              </Sunken>
              <Gap />
              <DockTitle $h={26}>
                <span>Doc<u>u</u>mentation</span>
                <DockButtons><RestoreIcon /><CloseIcon /></DockButtons>
              </DockTitle>
              <DocHead>
                <DiagramIcon size={16} />
                <DocName>class diagram--quiz system</DocName>
                <DocBox />
              </DocHead>
              <Sunken />
            </LeftDock>
            <Split />
            <Center>
              <TabBar>
                <NewTab>
                  <svg width="22" height="20" viewBox="0 0 22 20">
                    <rect x="2.500" y="3.500" width="14" height="12" rx="2" fill="#f4f4f4" stroke="#bdbdbd" />
                    <circle cx="5" cy="5" r="3.400" fill="#f2cf3a" /><circle cx="5" cy="4.500" r="1.400" fill="#fff6a8" />
                    <path d="M12 14h9l-4.500 5z" />
                  </svg>
                </NewTab>
                <Tab>
                  <DiagramIcon size={24} />
                  <span>class diagram--quiz system</span>
                  <svg width="14" height="14" viewBox="0 0 14 14">
                    <rect x=".5" y=".5" width="13" height="13" rx="1.500" fill="#e0745a" stroke="#c8452a" />
                    <path d="M4 4l6 6M10 4l-6 6" stroke="#fff" strokeWidth="2.200" />
                  </svg>
                </Tab>
              </TabBar>
              <CanvasFrame>
                <Canvas>
                  <Edges width="1408" height="820" viewBox="382 188 1408 820" fill="none" stroke="#ff1010" strokeWidth="1">
                    <g strokeDasharray="4 2">
                      <path d="M744 400.500H947" />
                      <path d="M1026 780.500H765" />
                      <path d="M1291 439.500L1409 508.500" />
                    </g>
                    <path d="M760 390.500L744 400.500L760 410.500" />
                    <path d="M1009 770L1026 780.500L1009 791" />
                    <path d="M1311 439.500H1291L1300 457" />
                    <path d="M582 729V562M572 579L582 562L592 579" />
                    <path d="M744 562.500L1026 672.500M1015 657.500L1026 672.500L1007 675.500" />
                    <path d="M1409 780.500H1267M1284 770L1267 780.500L1284 791" />
                  </Edges>
                  {classes.map((c) => (
                    <ClassNode key={c.name} $x={c.x} $y={c.y} $w={c.w}>
                      <ClassTitle>{c.name}</ClassTitle>
                      <Compartment $ls={0.36}>{c.attrs.map((a) => <Member key={a}>- {a}</Member>)}</Compartment>
                      <Compartment $ls={0.7}>{c.ops.map((a) => <Member key={a}>+ {a}</Member>)}</Compartment>
                    </ClassNode>
                  ))}
                </Canvas>
                <ScrollTrack $w={26}>
                  <ScrollPart $h={25}><Arrow /></ScrollPart>
                  <ScrollPart $mt={467} />
                </ScrollTrack>
              </CanvasFrame>
            </Center>
            <Bird>
              <BirdTitle>
                <BirdClip><u>B</u>ird's eye</BirdClip>
                <RestoreIcon /><CloseIcon />
              </BirdTitle>
              <BirdView><Minimap /></BirdView>
            </Bird>
          </Body>
        </Window>
      </WindowRow>

      <Taskbar>
        <Widget>
          <Coins />
          <Stack $align="flex-start" $ls={0.5}>
            <span>INRUSD</span>
            <Up>+0.29%</Up>
          </Stack>
        </Widget>
        <StartCell><WinLogo /></StartCell>
        <SearchPill><SearchGlass />Search</SearchPill>
        <AppList>
          {apps.map((a, i) => <AppCell key={i}>{a}</AppCell>)}
          <AppCell>
            <ActiveApp>
              <svg width="36" height="27" viewBox="0 0 36 27">
                <rect width="36" height="27" fill="#fafafa" stroke="#8a8a8a" />
                <rect width="36" height="2.500" fill="#9b9b9b" />
                <rect x="11" y="5" width="14" height="18" rx="1" fill="#1573c8" />
                <path d="M4 6h4M4 9.500h4M4 13h4M4 16.500h4M4 20h4M28 6h4M28 9.500h4M28 13h4" stroke="#cfcfcf" strokeWidth="1.600" />
              </svg>
              <ActiveMark />
            </ActiveApp>
          </AppCell>
        </AppList>
        <Tray>
          <TrayIcon $ml={71}>
            <svg width="17" height="11" viewBox="0 0 17 11"><path d="M1 9.500l7.500-7.500L16 9.500" fill="none" stroke="#fff" strokeWidth="1.900" /></svg>
          </TrayIcon>
          <Stack $align="center" $w={60} $ls={0.4} $ml={19}><span>ENG</span><span>IN</span></Stack>
          <TrayIcon $ml={15}><Wifi /></TrayIcon>
          <TrayIcon $ml={12}><Mute /></TrayIcon>
          <TrayIcon $ml={12}><Battery /></TrayIcon>
          <Stack $align="flex-end" $w={117} $ls={0.5}><span>18:48</span><span>10-05-2023</span></Stack>
          <Notice>2</Notice>
        </Tray>
      </Taskbar>
    </Screen>
  );
}
